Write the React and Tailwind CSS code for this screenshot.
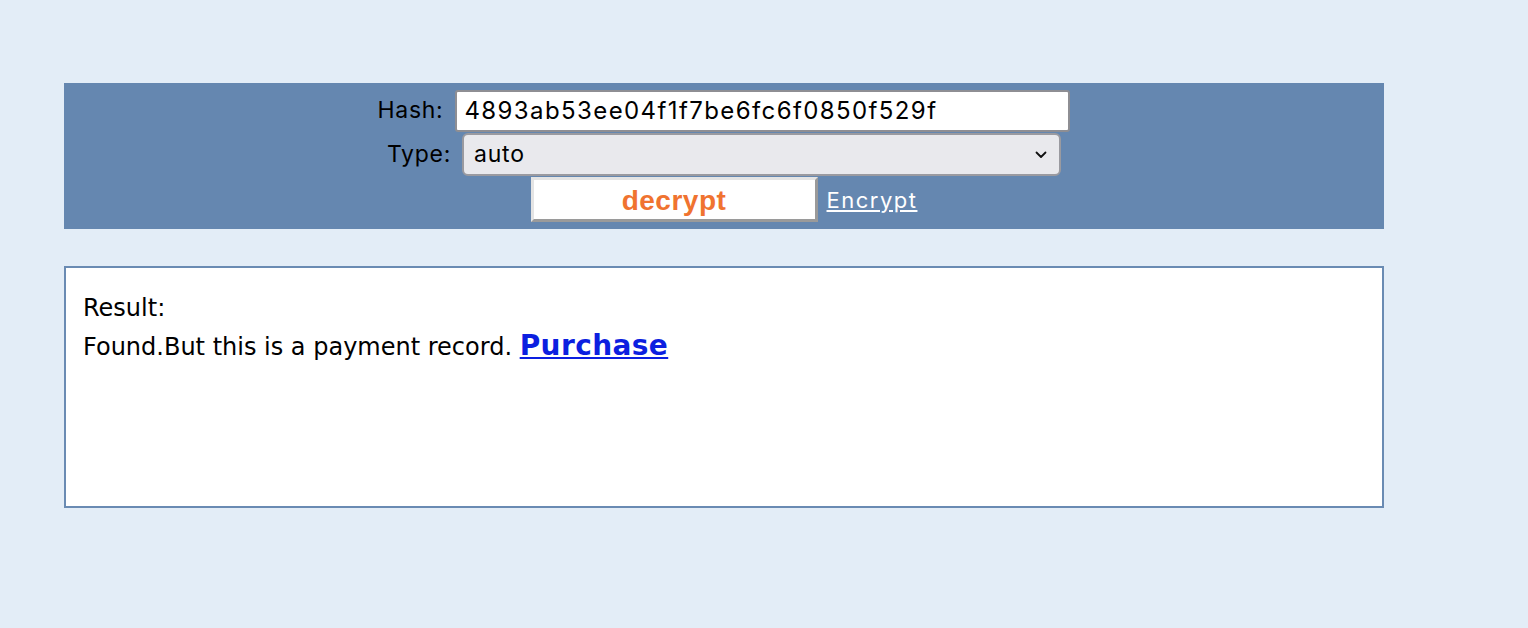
import React, { useState } from 'react';

function App() {
    const [hash, setHash] = useState('4893ab53ee04f1f7be6fc6f0850f529f');
    const [type, setType] = useState('auto');

    return (
        <div className="min-h-screen bg-[#e3edf7] pt-[83px] pl-16" style={{ fontFamily: 'Inter, "Liberation Sans", sans-serif' }}>
            <div className="w-[1320px] h-[146px] bg-[#6587b0] flex flex-col items-center pt-[6px] text-black">
                <div className="flex items-center h-[43px]">
                    <label className="text-[23px] tracking-[0.7px] mr-[12px]">Hash:</label>
                    <input
                        type="text"
                        value={hash}
                        onChange={e => setHash(e.target.value)}
                        className="w-[615px] h-[42px] bg-white border-2 border-[#8e8e93] rounded-[3px] px-[7px] text-[24px] tracking-[1.4px] text-black outline-none"
                    />
                </div>
                <div className="flex items-center h-[44px]">
                    <label className="text-[23px] tracking-[0.7px] mr-[11px]">Type:</label>
                    <div className="relative w-[599px] h-[43px]">
                        <select
                            value={type}
                            onChange={e => setType(e.target.value)}
                            className="appearance-none w-full h-full bg-[#e9e9ed] border-2 border-[#9a9aa0] rounded-[6px] pl-[10px] text-[23px] tracking-[0.8px] text-black outline-none"
                        >
                            <option value="auto">auto</option>
                            <option value="md5">md5</option>
                            <option value="sha1">sha1</option>
                        </select>
                        <svg className="absolute right-[14px] top-[18px] pointer-events-none" width="12" height="8" viewBox="0 0 12 8">
                            <path d="M1.5 1.5 L6 6 L10.5 1.5" fill="none" stroke="#111" strokeWidth="1.8" strokeLinecap="round" strokeLinejoin="round" />
                        </svg>
                    </div>
                </div>
                <div className="flex items-center h-[46px]">
                    <button
                        type="button"
                        className="w-[287px] h-[45px] bg-white border-[3px] border-t-[#e4e4e4] border-l-[#e4e4e4] border-r-[#9a9a9a] border-b-[#9a9a9a] text-[#f07330] text-[28px] font-bold tracking-[0.5px]"
                        style={{ fontFamily: '"Liberation Sans", Arial, sans-serif' }}
                    >
                        decrypt
                    </button>
                    <a href="#" className="ml-[9px] text-white underline text-[22px] tracking-[1.5px] mt-[2px]">Encrypt</a>
                </div>
            </div>

            <div
                className="w-[1320px] h-[242px] mt-[37px] bg-white border-2 border-[#6a8bb3] pt-[25px] pl-[17px] text-black"
                style={{ fontFamily: '"DejaVu Sans", Verdana, sans-serif' }}
            >
                <div className="text-[24px] leading-[30px]">Result:</div>
                <div className="text-[24px] leading-[39px] mt-[3px]">
                    Found.But this is a payment record.{' '}
                    <a href="#" className="text-[#0c1fe0] underline font-bold text-[28px] tracking-[0.4px]">Purchase</a>
                </div>
            </div>
        </div>
    );
}

export default App;
